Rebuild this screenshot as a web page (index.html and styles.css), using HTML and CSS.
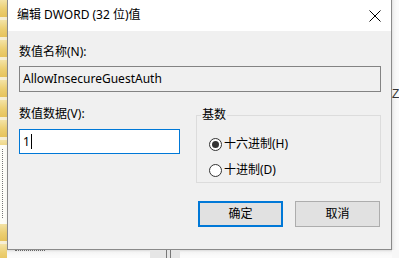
FILE: index.html
```html
<!DOCTYPE html>
<html lang="zh-CN">
<head>
<meta charset="utf-8">
<title>编辑 DWORD (32 位)值</title>
<link rel="stylesheet" href="styles.css">
</head>
<body>
<div class="screen">
  <div class="bg-left">
    <div class="folders"></div>
    <div class="dots"></div>
    <div class="folders short"></div>
  </div>
  <div class="dialog">
    <div class="titlebar">
      <span class="title">编辑 DWORD (32 位)值</span>
      <svg class="close" width="12" height="12" viewBox="0 0 12 12" aria-label="关闭">
        <path d="M0.5 0.5 L11.5 11.5 M11.5 0.5 L0.5 11.5" stroke="#000" stroke-width="1" fill="none"/>
      </svg>
    </div>
    <div class="content">
      <div class="label">数值名称(N):</div>
      <div class="field readonly">AllowInsecureGuestAuth</div>
      <div class="row">
        <div class="data-col">
          <div class="label">数值数据(V):</div>
          <div class="field focused"><span>1</span><span class="caret"></span></div>
        </div>
        <fieldset class="group">
          <legend>基数</legend>
          <div class="radio"><span class="dot checked"></span><span>十六进制(H)</span></div>
          <div class="radio"><span class="dot"></span><span>十进制(D)</span></div>
        </fieldset>
      </div>
      <div class="buttons">
        <div class="btn default">确定</div>
        <div class="btn">取消</div>
      </div>
    </div>
  </div>
  <div class="bg-right"><span class="z">Z</span></div>
  <div class="bg-bottom">
    <span class="btm-mark"></span>
    <span class="btm-shade"></span>
    <span class="btm-lines"></span>
  </div>
  <div class="bg-corner"></div>
</div>
</body>
</html>
```
FILE: styles.css
```css
* { box-sizing: border-box; }
html, body { margin: 0; padding: 0; background: #fff; }
body { font-family: "Noto Sans", "Noto Sans CJK SC", sans-serif; font-size: 12px; color: #000; }

.screen {
  width: 399px;
  height: 258px;
  overflow: hidden;
  display: grid;
  grid-template-columns: 7px 385px 7px;
  grid-template-rows: 250px 8px;
  background: #fbfbfb;
}

.bg-left {
  grid-column: 1; grid-row: 1 / span 2;
  display: flex; flex-direction: column;
  background: #fdfdf8;
}
.folders {
  height: 146px;
  background: repeating-linear-gradient(to bottom,
    #f3e3a6 0, #eccf72 9px, #e6c35c 17px, #f6efd6 17px, #f6efd6 20px);
}
.folders.short { height: 34px; margin-top: 6px; }
.dots {
  height: 70px;
  margin-top: 4px;
  margin-left: 2px;
  border-left: 1px dotted #777;
}

.dialog {
  grid-column: 2; grid-row: 1;
  display: flex; flex-direction: column;
  border: 1px solid #8a8a8a;
  border-top: none;
  background: #f0f0f0;
  box-shadow: 2px 2px 4px rgba(0,0,0,0.18);
}

.titlebar {
  height: 31px;
  background: #fff;
  display: flex;
  align-items: center;
  padding-left: 9px;
  padding-right: 10px;
}
.title { flex: 1; line-height: 16px; margin-top: -1px; }
.close { display: block; }

.content {
  padding: 13px 10px 0 11px;
  display: flex; flex-direction: column;
}
.label { line-height: 16px; height: 16px; }
.field {
  margin-top: 6px;
  height: 26px;
  border: 1px solid #7a7a7a;
  padding-left: 3px;
  display: flex; align-items: center;
  line-height: 16px;
}
.field.readonly { background: #f0f0f0; border-color: #838383; }
.field.focused { background: #fff; border-color: #0078d7; margin-top: 7px; height: 25px; }
.caret { display: inline-block; width: 1px; height: 15px; background: #000; margin-left: 1px; }

.row { display: flex; margin-top: 14px; }
.data-col { width: 161px; }

.group {
  margin: 3px 0 0 16px;
  width: 185px;
  height: 74px;
  border: 1px solid #dcdcdc;
  padding: 10px 0 0 12px;
  min-width: 0;
}
.group legend {
  padding: 0 1px;
  margin-left: -8px;
  line-height: 12px;
}
.radio { display: flex; align-items: center; height: 26px; gap: 2px; line-height: 16px; }
.dot {
  width: 13px; height: 13px;
  border: 1px solid #333;
  border-radius: 50%;
  background: #fff;
  display: flex; align-items: center; justify-content: center;
}
.dot.checked::after {
  content: "";
  width: 7px; height: 7px;
  border-radius: 50%;
  background: #333;
}

.buttons { display: flex; justify-content: flex-end; gap: 12px; margin-top: 18px; padding-right: 1px; }
.btn {
  width: 85px; height: 26px;
  background: #e1e1e1;
  border: 1px solid #adadad;
  display: flex; align-items: center; justify-content: center;
  line-height: 16px;
}
.btn.default { border: 2px solid #0078d7; }

.bg-right {
  grid-column: 3; grid-row: 1;
  background: linear-gradient(to right, #e2e2e2 0, #f3f3f3 2px, #fafafa 5px);
  position: relative;
}
.z { position: absolute; left: 0; top: 87px; font-family: "Liberation Sans", sans-serif; font-size: 12px; line-height: 14px; color: #333; }

.bg-bottom {
  grid-column: 2; grid-row: 2;
  background: linear-gradient(to bottom, #dcdcdc 0, #f4f4f4 2px, #fbfbfb 6px);
  position: relative;
}
.btm-mark { position: absolute; left: 8px; top: 0; width: 30px; height: 1px; border-top: 1px dotted #666; }
.btm-shade { position: absolute; left: 143px; top: 0; width: 30px; height: 8px; background: #e6e6e6; }
.btm-lines { position: absolute; left: 159px; top: 0; width: 5px; height: 8px; border-left: 1px solid #777; border-right: 1px solid #777; }
.bg-corner { grid-column: 3; grid-row: 2; background: #f7f7f7; }
```
